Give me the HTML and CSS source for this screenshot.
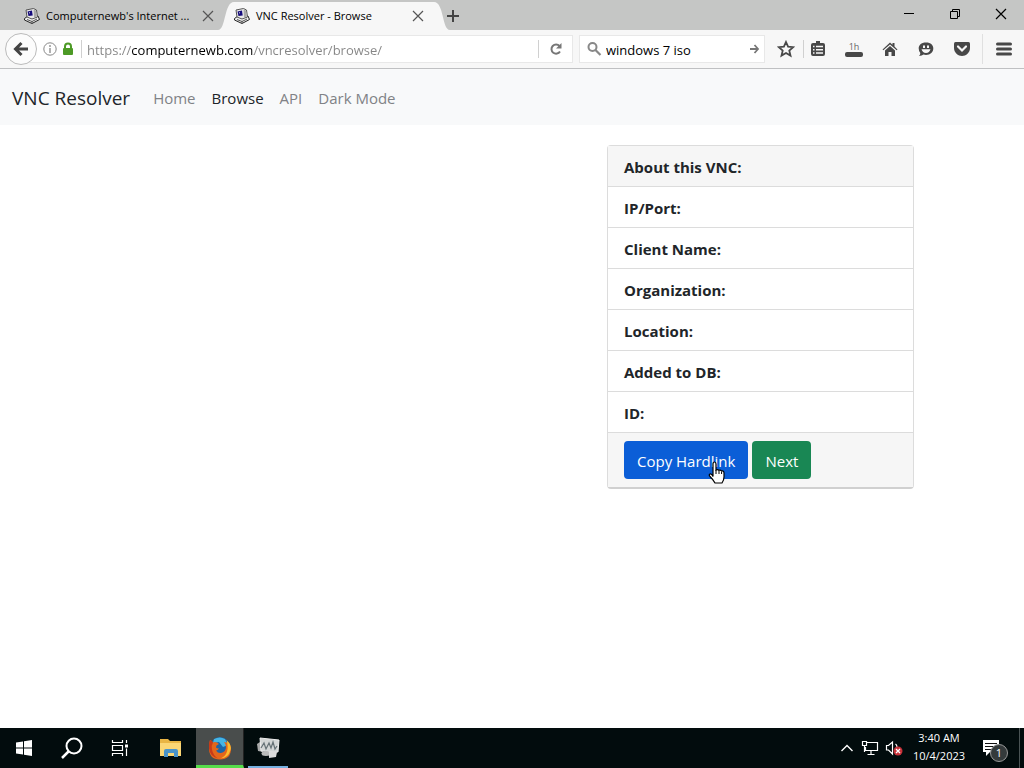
FILE: index.html
```html
<!DOCTYPE html>
<html lang="en">
<head>
<meta charset="utf-8">
<meta name="viewport" content="width=device-width, initial-scale=1">
<title>VNC Resolver - Browse</title>
<link rel="stylesheet" href="styles.css">
</head>
<body>
<svg width="0" height="0" class="defs" aria-hidden="true">
  <symbol id="pc" viewBox="0 0 16 16">
    <path d="M.5 10.500L4 8l10 0 1.500 3.500L8 15.500.5 12z" fill="#eee" stroke="#222" stroke-width="1"/>
    <path d="M2 2L9.500.5l3 1.500 1 7L8 11 3 9z" fill="#e8e8e8" stroke="#555" stroke-width="1"/>
    <path d="M9.500 1.500l2.500 1 .8 6-2.800 1z" fill="#aaa"/>
    <path d="M3.500 3.500l4.500-1 .7 5L4.500 8z" fill="#160b7c"/>
    <path d="M5 4h1v1.500H5z" fill="#99b"/>
    <path d="M3 11.500l5 2 5-2.500M8 15v-2" fill="none" stroke="#555"/>
  </symbol>
  <symbol id="close" viewBox="0 0 12 12"><path d="M1 1l10 10M11 1L1 11" fill="none" stroke="currentColor" stroke-width="1.200"/></symbol>
</svg>

<header class="chrome">
  <div class="titlebar">
    <div class="tabs">
      <div class="tab">
        <svg class="i16"><use href="#pc"/></svg>
        <span class="tab-title">Computernewb's Internet ...</span>
        <button class="icon-btn tab-close" aria-label="Close tab"><svg class="i12"><use href="#close"/></svg></button>
      </div>
      <div class="tab active">
        <svg class="curve left" viewBox="0 0 16 28"><path d="M0 28C8 28 6 0 16 0V28z" fill="#f7f7f7"/></svg>
        <svg class="i16"><use href="#pc"/></svg>
        <span class="tab-title">VNC Resolver - Browse</span>
        <button class="icon-btn tab-close" aria-label="Close tab"><svg class="i12"><use href="#close"/></svg></button>
        <svg class="curve right" viewBox="0 0 16 28"><path d="M16 28C8 28 10 0 0 0V28z" fill="#f7f7f7"/></svg>
      </div>
      <button class="icon-btn new-tab" aria-label="New tab"><svg class="i12" viewBox="0 0 12 12"><path d="M6 0v12M0 6h12" stroke="#444" stroke-width="2"/></svg></button>
    </div>
    <div class="window-controls">
      <button class="icon-btn win" aria-label="Minimize"><svg class="i12" viewBox="0 0 12 12"><path d="M1 5.500h10" stroke="#000"/></svg></button>
      <button class="icon-btn win" aria-label="Restore"><svg class="i12" viewBox="0 0 12 12"><path d="M1.500 3.500h7v7h-7zM3.500 3.500v-2h7v7h-2" fill="none" stroke="#000"/></svg></button>
      <button class="icon-btn win" aria-label="Close"><svg class="i12"><use href="#close"/></svg></button>
    </div>
  </div>

  <div class="toolbar">
    <div class="location">
      <button class="icon-btn back" aria-label="Back"><svg class="i16" viewBox="0 0 16 16"><path d="M8.500 2L2.500 8l6 6M3 8h12" fill="none" stroke="#444" stroke-width="3"/></svg></button>
      <div class="urlbox">
        <svg class="i14" viewBox="0 0 14 14"><circle cx="7" cy="7" r="6.200" fill="none" stroke="#888"/><path d="M7 6v5M7 3v2" stroke="#888" stroke-width="1.300"/></svg>
        <svg class="lock" viewBox="0 0 12 14"><path d="M3 7V4.500a3 3 0 0 1 6 0V7" fill="none" stroke="#4d9a26" stroke-width="2"/><rect x="1" y="6" width="10" height="7" rx="1" fill="#4d9a26"/></svg>
        <span class="divider"></span>
        <input class="url" type="text" aria-label="Address" value="https://computernewb.com/vncresolver/browse/">
        <span class="divider"></span>
        <button class="icon-btn reload" aria-label="Reload"><svg class="i14" viewBox="0 0 14 14"><path d="M11 9.500A4.600 4.600 0 1 1 10.500 4" fill="none" stroke="#777" stroke-width="2"/><path d="M12.500 1v5.500H7z" fill="#777"/></svg></button>
      </div>
    </div>
    <div class="searchbox">
      <svg class="i16" viewBox="0 0 16 16"><circle cx="6.500" cy="6" r="4" fill="none" stroke="#888" stroke-width="2"/><path d="M9.500 9l5 5" stroke="#888" stroke-width="2.200"/></svg>
      <input class="search" type="text" aria-label="Search" value="windows 7 iso">
      <button class="icon-btn" aria-label="Go"><svg class="i12" viewBox="0 0 12 12"><path d="M6.500 2l3.500 4-3.500 4M2 6h8" fill="none" stroke="#777" stroke-width="1.800"/></svg></button>
    </div>
    <div class="tools">
      <button class="icon-btn tool" aria-label="Bookmark"><svg class="i18" viewBox="0 0 18 18"><path d="M9 2l2.100 4.700 5.100.5-3.900 3.400 1.200 5L9 13l-4.500 2.600 1.200-5L1.800 7.200l5.100-.5z" fill="none" stroke="#484848" stroke-width="1.800"/></svg></button>
      <span class="divider"></span>
      <button class="icon-btn tool first" aria-label="Bookmarks list"><svg class="i18" viewBox="0 0 18 18"><path d="M4 3h3V1h4v2h3q2 0 2 2v9q0 2-2 2H4q-2 0-2-2V5q0-2 2-2z" fill="#484848"/><path d="M4 6.500h1.500M7 6.500h7M4 9.700h1.500M7 9.700h7M4 13h1.500M7 13h7" stroke="#f7f7f7" stroke-width="1.600"/></svg></button>
      <button class="icon-btn tool hour" aria-label="History, one hour"><span>1h</span><span class="hour-bar"></span></button>
      <button class="icon-btn tool" aria-label="Home"><svg class="i18" viewBox="0 0 18 18"><path d="M1.500 9.500L9 2.500l2.500 2.200V3h2v3.500l3 3-.8.800L9 4.500l-6.700 5.800z" fill="#484848"/><path d="M4 10.500L9 6l5 4.500V16h-3.500v-4h-3v4H4z" fill="#484848"/></svg></button>
      <button class="icon-btn tool" aria-label="Chat"><svg class="i18" viewBox="0 0 18 18"><path d="M9 2.500c5 0 7.300 2.700 7.300 6S13.500 15 9 15q-1.500 0-2.500-.4Q5 16 2 16q1.500-1.500 1.300-3Q1.700 11 1.700 8.500C1.700 5.200 4 2.500 9 2.500z" fill="#484848"/><path d="M6 5.500h2V8H6zM10 5.500h2V8h-2zM4.500 9.300h9Q12.500 13 9 13T4.500 9.300z" fill="#f7f7f7"/></svg></button>
      <button class="icon-btn tool" aria-label="Pocket"><svg class="i18" viewBox="0 0 18 18"><path d="M2.500 2h13Q17 2 17 3.500V8c0 4.500-4 8-8 8s-8-3.500-8-8V3.500Q1 2 2.500 2z" fill="#484848"/><path d="M5 6.500l4 4 4-4" fill="none" stroke="#f7f7f7" stroke-width="2.200" stroke-linecap="round"/></svg></button>
      <span class="divider tall"></span>
      <button class="icon-btn menu" aria-label="Menu"><svg class="i18" viewBox="0 0 18 18"><path d="M2.500 4h13M2.500 9h13M2.500 14h13" stroke="#484848" stroke-width="3" stroke-linecap="round"/></svg></button>
    </div>
  </div>
</header>

<nav class="navbar">
  <a class="brand" href="#">VNC Resolver</a>
  <a class="nav-link" href="#">Home</a>
  <a class="nav-link current" href="#">Browse</a>
  <a class="nav-link" href="#">API</a>
  <a class="nav-link" href="#">Dark Mode</a>
</nav>

<main class="page">
  <section class="card">
    <h1 class="row card-head">About this VNC:</h1>
    <ul class="list">
      <li class="row">IP/Port:</li>
      <li class="row">Client Name:</li>
      <li class="row">Organization:</li>
      <li class="row">Location:</li>
      <li class="row">Added to DB:</li>
      <li class="row">ID:</li>
    </ul>
    <div class="card-foot">
      <button class="btn primary">Copy Hardlink<svg class="cursor" viewBox="0 0 18 24" aria-hidden="true"><path d="M5 14V3q0-2 1.500-2T8 3v6q1.500-1 3 .3 1.500-.8 2.600.7 2.400-.5 2.400 2v4q0 3-2 6H7q-1.500-3-5-6.500Q.5 13.500 2 13t3 2.500z" fill="#fff" stroke="#000" stroke-width="1.200"/><path d="M8 9v4M11 9.500V13M13.600 10.500V13" stroke="#000"/></svg></button>
      <button class="btn success">Next</button>
    </div>
  </section>
</main>

<footer class="taskbar">
  <div class="apps">
    <button class="icon-btn app" aria-label="Start"><svg class="i18" viewBox="0 0 18 18"><path d="M1 3.500L8 2.500V8.500H1zM9 2.300L17 1v7.500H9zM1 9.500H8v6L1 14.500zM9 9.500h8V17L9 15.700z" fill="#fff"/></svg></button>
    <button class="icon-btn app" aria-label="Search"><svg class="i24" viewBox="0 0 24 24"><circle cx="14" cy="10" r="7.500" fill="none" stroke="#fff" stroke-width="2"/><path d="M8.500 15.500L2 22" stroke="#fff" stroke-width="2.500"/></svg></button>
    <button class="icon-btn app" aria-label="Task view"><svg class="i18" viewBox="0 0 18 18"><path d="M1.500 1v2.500h10V1M1.500 6.500h10v5h-10zM1.500 17v-2.500h10V17M15.500 1v3M15.500 9.500V17" fill="none" stroke="#fff" stroke-width="1.200"/><path d="M14 5.500h3v3h-3z" fill="#fff"/></svg></button>
    <button class="icon-btn app files" aria-label="File Explorer"><svg class="i24" viewBox="0 0 24 24"><path d="M1 3h8l2 2h11v15H1z" fill="#e9b544"/><path d="M1 7h21v13H1z" fill="#fbd675"/><path d="M5 21v-6q0-2 2-2h10q2 0 2 2v6h-4v-4H9v4z" fill="#4a93c9"/></svg></button>
    <button class="icon-btn app firefox" aria-label="Firefox"><svg class="i24" viewBox="0 0 24 24"><circle cx="12" cy="10.500" r="9.500" fill="#1c65a8"/><path d="M6 3q6-3 11 0l3 6-5 2-4-5-6 1z" fill="#45b5e5"/><path d="M2 4q2 .5 3 2.500 2-1 4 0L11 8 8.500 9.500 8 11.500q1 1 3 1-1 2-3 2 2 3 5 2.500 5-1 5-6 0-3-2-5l5 1q2 3 2 6 0 10-11 10.500Q1 23.500 1 12 1 7 2 4z" fill="#e4661b"/><path d="M18.500 4q5.500 5 4 10-2 8-10 8.500 5-2 6.500-7 1.500-5-.5-11.500z" fill="#fbbb2f"/><path d="M2 4q2 .5 3 2.500-2 3-1 7 1 6 6 9-8-2-9-10Q.7 7 2 4z" fill="#c83a18"/></svg></button>
    <button class="icon-btn app monitor" aria-label="System monitor"><svg class="i24" viewBox="0 0 24 24"><path d="M1 8l6-4v12l-5-1z" fill="#aaa"/><path d="M4 2l19 2-1 12-17-1z" fill="#d3d6d6" stroke="#eee"/><path d="M5 12l3-5 2 6 3-6 2 5 2-6 2 7 2-3" fill="none" stroke="#667277" stroke-width="1.200"/><ellipse cx="10" cy="17.500" rx="4.500" ry="2.500" fill="#bbb"/><path d="M13 15l8 1-1 5-7 1z" fill="#ddd"/></svg></button>
  </div>
  <div class="tray">
    <button class="icon-btn" aria-label="Show hidden icons"><svg class="i16" viewBox="0 0 16 16"><path d="M2.500 11L8 5.500l5.500 5.500" fill="none" stroke="#fff" stroke-width="1.400"/></svg></button>
    <button class="icon-btn" aria-label="Network"><svg class="i18" viewBox="0 0 18 18"><path d="M5.500 3.500h11v8H4.500V8M10 11.500V15M6.500 15.500h7M1.500 2.500h4v4h-4zM3.500 6.500V13" fill="none" stroke="#fff" stroke-width="1.200"/></svg></button>
    <button class="icon-btn" aria-label="Muted"><svg class="i18" viewBox="0 0 18 18"><path d="M1.500 6.500h2L7.500 3v12l-4-4h-2zM10.500 5q1.500 1 1.500 3" fill="none" stroke="#fff" stroke-width="1.200"/><circle cx="13" cy="12" r="4.500" fill="#c9323a"/><path d="M11 10l4 4M15 10l-4 4" stroke="#fff" stroke-width="1.300"/></svg></button>
    <div class="clock"><span>3:40 AM</span><span>10/4/2023</span></div>
    <button class="icon-btn note" aria-label="Notifications"><svg class="i18" viewBox="0 0 18 18"><path d="M1 1h16v12H8l-4 4v-4H1z" fill="#fff"/><path d="M3 4.500h12M3 7.500h12M3 10.500h7" stroke="#111"/></svg><span class="badge">1</span></button>
    <span class="desktop-edge"></span>
  </div>
</footer>
</body>
</html>
```

FILE: styles.css
```css
* { box-sizing: border-box; }
body {
  margin: 0;
  min-height: 100vh;
  display: flex;
  flex-direction: column;
  background: #fff;
  color: #212529;
  font: 15px/24px "Open Sans", "Noto Sans", sans-serif;
}
button, input { font: inherit; color: inherit; }
.defs { position: absolute; }
svg { display: block; flex: none; }
.i12 { width: 12px; height: 12px; }
.i14 { width: 14px; height: 14px; }
.i16 { width: 16px; height: 16px; }
.i18 { width: 18px; height: 18px; }
.i24 { width: 24px; height: 24px; }
.icon-btn {
  display: flex;
  align-items: center;
  justify-content: center;
  flex: none;
  padding: 0;
  border: 0;
  background: none;
}

.chrome { color: #000; font-size: 12px; line-height: 16px; border-bottom: 1px solid #bfc0c2; }
.titlebar { display: flex; justify-content: space-between; height: 30px; background: #c5c6c5; }
.tabs { display: flex; padding: 2px 0 0 16px; }
.tab {
  position: relative;
  display: flex;
  align-items: center;
  width: 210px;
  padding: 0 12px 0 8px;
}
.tab.active { background: #f7f7f7; width: 200px; margin-left: 8px; padding: 0 10px 0 0; }
.curve { position: absolute; bottom: 0; width: 16px; height: 28px; }
.curve.left { right: 100%; }
.curve.right { left: 100%; }
.tab-title { flex: 1; padding-left: 6px; font-size: 11px; white-space: nowrap; }
.tab-close { color: #555; }
.new-tab { margin-left: 13px; }
.window-controls { display: flex; }
.win { width: 46px; height: 28px; }

.toolbar { display: flex; height: 38px; align-items: center; background: #f7f7f7; }
.location { display: flex; flex: 1; align-items: center; padding-left: 5px; }
.back {
  position: relative;
  width: 32px;
  height: 32px;
  border: 1px solid #bbb;
  border-radius: 50%;
  background: #fcfcfc;
}
.urlbox {
  display: flex;
  flex: 1;
  align-items: center;
  height: 28px;
  margin-left: -9px;
  padding-left: 14px;
  background: #fff;
  border: 1px solid #e8e8e8;
}
.lock { width: 12px; height: 14px; margin: 0 7px 0 5px; }
.divider { flex: none; width: 1px; height: 18px; background: #d0d0d0; }
.url, .search { flex: 1; min-width: 0; height: 24px; border: 0; outline: 0; background: none; font-size: 13px; }
.url {
  padding: 2px 5px 0;
  color: transparent;
  background: linear-gradient(90deg, #858585 50px, #000 50px, #000 172px, #858585 172px);
  background-clip: text;
  -webkit-background-clip: text;
}
.reload { width: 33px; }
.searchbox {
  display: flex;
  align-items: center;
  width: 186px;
  height: 28px;
  margin-left: 6px;
  padding: 0 4px 0 6px;
  background: #fff;
  border: 1px solid #e8e8e8;
}
.search { padding: 2px 4px 0; }
.tools { display: flex; align-items: center; padding-left: 3px; }
.tool { width: 36px; }
.tool + .divider { margin-left: -1px; }
.tool.first { margin-left: -4px; }
.hour { flex-direction: column; font-size: 9px; line-height: 10px; color: #666; }
.hour-bar { width: 18px; height: 5px; border-radius: 2px; background: #484848; }
.divider.tall { height: 30px; margin-left: 2px; background: #e0e0e0; }
.menu { width: 41px; }

.navbar { display: flex; align-items: center; height: 56px; padding: 2px 12px 0; background: #f8f9fa; }
.navbar a { text-decoration: none; white-space: nowrap; }
.brand { margin-right: 15px; font-size: 19px; line-height: 32px; color: #212529; }
.nav-link { padding: 0 8px; color: #808286; }
.nav-link.current { color: #212529; }

.page {
  flex: 1;
  display: grid;
  grid-template-columns: 607fr 307fr 110fr;
  align-items: start;
  padding: 20px 0;
}
.card { grid-column: 2; border: 1px solid #dcdcdc; border-bottom: 2px solid #d0d0d0; border-radius: 4px; }
.row { margin: 0; padding: 9px 16px 7px; border-bottom: 1px solid #dcdcdc; font-size: 15px; line-height: 24px; font-weight: 700; }
.card-head, .card-foot { background: #f6f6f6; }
.list { margin: 0; padding: 0; list-style: none; }
.card-foot { display: flex; gap: 4px; padding: 8px 16px; }
.btn { position: relative; height: 38px; padding: 1px 13px 0; border: 0; border-radius: 4px; color: #fff; white-space: nowrap; }
.primary { background: #0b5ed7; }
.success { background: #198754; }
.cursor { position: absolute; right: 22px; bottom: -6px; width: 18px; height: 24px; }

.taskbar { display: flex; justify-content: space-between; height: 40px; background: #020c0d; color: #fff; }
.apps, .tray { display: flex; }
.app { width: 48px; }
.files { margin-left: 4px; margin-right: -4px; }
.firefox { margin-left: 4px; background: #494d4c; border-bottom: 3px solid #55dc49; padding-top: 3px; border-right: 1px solid #222; }
.files { padding-right: 2px; }
.monitor { width: 40px; margin-left: 4px; border-bottom: 2px solid #76b0e0; padding-top: 2px; }
.tray { align-items: center; gap: 6px; }
.clock { display: flex; flex-direction: column; align-items: center; width: 60px; padding-bottom: 2px; font-size: 11px; line-height: 18px; }
.note { position: relative; width: 32px; margin-right: 4px; }
.badge {
  position: absolute;
  left: 15px;
  top: 5px;
  width: 18px;
  height: 18px;
  border: 1px solid #999;
  border-radius: 50%;
  background: #343a3b;
  font-size: 11px;
  line-height: 16px;
  text-align: center;
}
.desktop-edge { width: 5px; height: 40px; margin-left: 2px; border-left: 1px solid #4a5354; }
```
